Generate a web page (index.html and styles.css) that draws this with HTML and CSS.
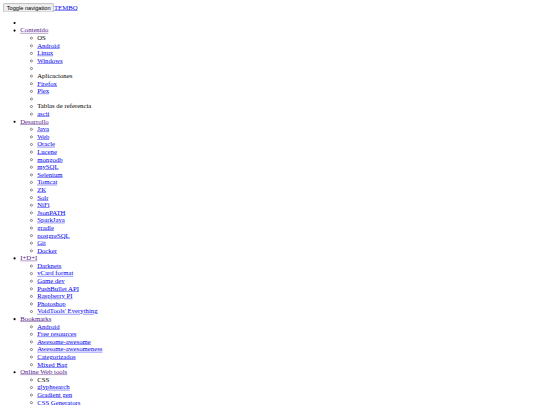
FILE: index.html
```html
<!DOCTYPE html>
<html>
<head>
<meta charset="utf-8">
<link rel="stylesheet" href="styles.css">
</head>
<body class="page">
<div class="frame">
<div class="navbar">
<button class="toggle">Toggle navigation</button><a class="brand" href="#">TEMBO</a>
</div>
<ul class="nav">
<li></li>
<li><a class="visited" href="#">Contenido</a>
<ul class="sub">
<li>OS</li>
<li><a href="#">Android</a></li>
<li><a href="#">Linux</a></li>
<li><a href="#">Windows</a></li>
<li></li>
<li>Aplicaciones</li>
<li><a href="#">Firefox</a></li>
<li><a href="#">Plex</a></li>
<li></li>
<li>Tablas de referencia</li>
<li><a href="#">ascii</a></li>
</ul>
</li>
<li><a class="visited" href="#">Desarrollo</a>
<ul class="sub">
<li><a href="#">Java</a></li>
<li><a href="#">Web</a></li>
<li><a href="#">Oracle</a></li>
<li><a href="#">Lucene</a></li>
<li><a href="#">mongodb</a></li>
<li><a href="#">mySQL</a></li>
<li><a href="#">Selenium</a></li>
<li><a href="#">Tomcat</a></li>
<li><a href="#">ZK</a></li>
<li><a href="#">Solr</a></li>
<li><a href="#">NiFi</a></li>
<li><a href="#">JsonPATH</a></li>
<li><a href="#">SparkJava</a></li>
<li><a href="#">gradle</a></li>
<li><a href="#">postgreSQL</a></li>
<li><a href="#">Git</a></li>
<li><a href="#">Docker</a></li>
</ul>
</li>
<li><a class="visited" href="#">I+D+I</a>
<ul class="sub">
<li><a href="#">Darknets</a></li>
<li><a href="#">vCard format</a></li>
<li><a href="#">Game dev</a></li>
<li><a href="#">PushBullet API</a></li>
<li><a href="#">Raspberry PI</a></li>
<li><a href="#">Photoshop</a></li>
<li><a href="#">VoidTools' Everything</a></li>
</ul>
</li>
<li><a class="visited" href="#">Bookmarks</a>
<ul class="sub">
<li><a href="#">Android</a></li>
<li><a href="#">Free resources</a></li>
<li><a href="#">Awesome-awesome</a></li>
<li><a href="#">Awesome-awesomeness</a></li>
<li><a href="#">Categorizados</a></li>
<li><a href="#">Mixed Bag</a></li>
</ul>
</li>
<li><a class="visited" href="#">Online Web tools</a>
<ul class="sub">
<li>CSS</li>
<li><a href="#">glyphsearch</a></li>
<li><a href="#">Gradient gen</a></li>
<li><a href="#">CSS Generators</a></li>
<li><a href="#">Flexbox</a></li>
<li><a href="#">Colors</a></li>
</ul>
</li>
</ul>
</div>
</body>
</html>
```
FILE: styles.css
```css
html {
  overflow: hidden;
}
.page {
  margin: 0;
  background: #fff;
}
.frame {
  width: 1280px;
  padding: 8px;
  box-sizing: border-box;
  transform: scale(0.421875);
  transform-origin: 0 0;
  font-family: "Liberation Serif", "Times New Roman", serif;
  font-size: 16px;
  color: #000;
}
.navbar a, .nav a {
  color: #0000ee;
}
.nav a.visited {
  color: #551a8b;
}
.sub {
  list-style-type: circle;
}
.toggle {
  font-family: "Liberation Sans", Arial, sans-serif;
  font-size: 13.333px;
}
```
